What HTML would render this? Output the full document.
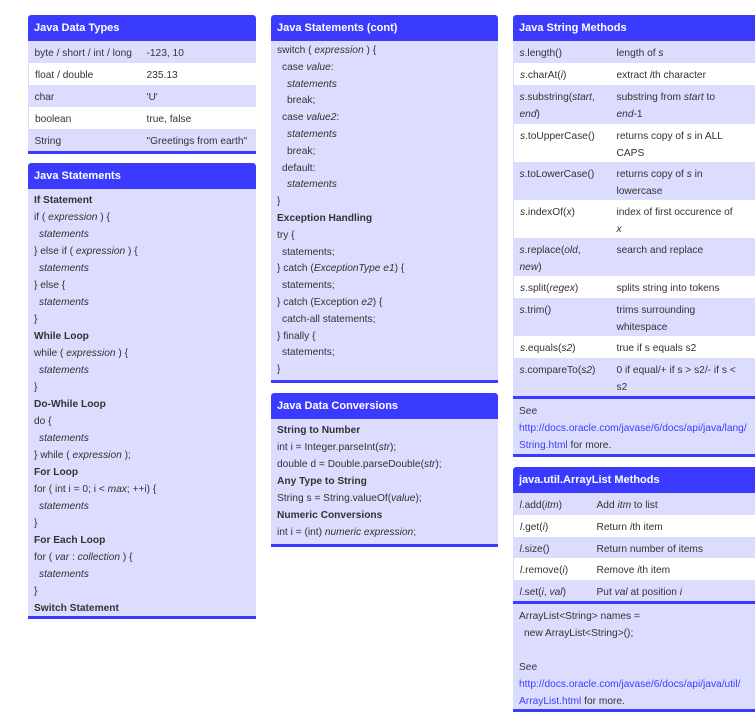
<!DOCTYPE html>
<html><head><meta charset="utf-8"><style>
*{margin:0;padding:0;box-sizing:border-box}
body{width:755px;height:715px;overflow:hidden;background:#fff;font-family:"Liberation Sans",Arial,sans-serif;font-size:10.2px;color:#333;position:relative}
.p{position:absolute;background:#dcdcff;border-bottom:3px solid #3b3bff;border-radius:3px 3px 0 0;overflow:hidden}
.h{background:#3b3bff;color:#fff;font-weight:bold;font-size:11px;height:26px;line-height:26px;padding-left:6px;border-radius:3px 3px 0 0}
table{border-collapse:collapse;width:100%;table-layout:fixed}
td{vertical-align:top;padding:4px 4px 0 6px;line-height:17px}
tr.w td{background:#fff}
tr.w td:first-child{border-left:1px solid #dcdcff}
.c{padding:4px 6px 4px 6px;line-height:17px}
.c div{white-space:nowrap}
b{color:#333}
.i1{padding-left:5px}.i2{padding-left:10px}
a{color:#3b3bff;text-decoration:none}
.sep{border-top:3px solid #3b3bff}
.nw{white-space:nowrap}
</style></head><body>

<div class="p" style="left:28px;top:15px;width:228px">
<div class="h">Java Data Types</div>
<table>
<col style="width:112px"><col>
<tr style="height:22px"><td class="nw">byte / short / int / long</td><td class="nw">-123, 10</td></tr>
<tr class="w" style="height:22px"><td>float / double</td><td>235.13</td></tr>
<tr style="height:22px"><td>char</td><td>'U'</td></tr>
<tr class="w" style="height:22px"><td>boolean</td><td>true, false</td></tr>
<tr style="height:22px"><td>String</td><td class="nw">"Greetings from earth"</td></tr>
</table></div>

<div class="p" style="left:28px;top:163px;width:228px;height:456px">
<div class="h">Java Statements</div>
<div class="c" style="padding-top:3px">
<div><b>If Statement</b></div>
<div>if ( <i>expression</i> ) {</div>
<div class="i1"><i>statements</i></div>
<div>} else if ( <i>expression</i> ) {</div>
<div class="i1"><i>statements</i></div>
<div>} else {</div>
<div class="i1"><i>statements</i></div>
<div>}</div>
<div><b>While Loop</b></div>
<div>while ( <i>expression</i> ) {</div>
<div class="i1"><i>statements</i></div>
<div>}</div>
<div><b>Do-While Loop</b></div>
<div>do {</div>
<div class="i1"><i>statements</i></div>
<div>} while ( <i>expression</i> );</div>
<div><b>For Loop</b></div>
<div>for ( int i = 0; i &lt; <i>max</i>; ++i) {</div>
<div class="i1"><i>statements</i></div>
<div>}</div>
<div><b>For Each Loop</b></div>
<div>for ( <i>var</i> : <i>collection</i> ) {</div>
<div class="i1"><i>statements</i></div>
<div>}</div>
<div><b>Switch Statement</b></div>
</div></div>

<div class="p" style="left:271px;top:15px;width:227px;height:368px">
<div class="h">Java Statements (cont)</div>
<div class="c" style="padding-top:2px;line-height:16.8px">
<div>switch ( <i>expression</i> ) {</div>
<div class="i1">case <i>value</i>:</div>
<div class="i2"><i>statements</i></div>
<div class="i2">break;</div>
<div class="i1">case <i>value2</i>:</div>
<div class="i2"><i>statements</i></div>
<div class="i2">break;</div>
<div class="i1">default:</div>
<div class="i2"><i>statements</i></div>
<div>}</div>
<div><b>Exception Handling</b></div>
<div>try {</div>
<div class="i1">statements;</div>
<div>} catch (<i>ExceptionType e1</i>) {</div>
<div class="i1">statements;</div>
<div>} catch (Exception <i>e2</i>) {</div>
<div class="i1">catch-all statements;</div>
<div>} finally {</div>
<div class="i1">statements;</div>
<div>}</div>
</div></div>

<div class="p" style="left:271px;top:393px;width:227px;height:154px">
<div class="h">Java Data Conversions</div>
<div class="c" style="padding-top:3px">
<div><b>String to Number</b></div>
<div>int i = Integer.parseInt(<i>str</i>);</div>
<div>double d = Double.parseDouble(<i>str</i>);</div>
<div><b>Any Type to String</b></div>
<div>String s = String.valueOf(<i>value</i>);</div>
<div><b>Numeric Conversions</b></div>
<div>int i = (int) <i>numeric expression</i>;</div>
</div></div>

<div class="p" style="left:513px;top:15px;width:250px;height:442px">
<div class="h">Java String Methods</div>
<table>
<col style="width:97px"><col>
<tr style="height:22px"><td><i>s</i>.length()</td><td>length of <i>s</i></td></tr>
<tr class="w" style="height:22px"><td><i>s</i>.charAt(<i>i</i>)</td><td>extract <i>i</i>th character</td></tr>
<tr style="height:39px"><td style="padding-right:10px"><i>s</i>.substring(<i>start</i>, <i>end</i>)</td><td style="padding-right:24px">substring from <i>start</i> to <i>end</i>-1</td></tr>
<tr class="w" style="height:38px"><td><i>s</i>.toUpperCase()</td><td style="padding-right:24px">returns copy of <i>s</i> in ALL CAPS</td></tr>
<tr style="height:38px"><td><i>s</i>.toLowerCase()</td><td style="padding-right:24px">returns copy of <i>s</i> in lowercase</td></tr>
<tr class="w" style="height:38px"><td><i>s</i>.indexOf(<i>x</i>)</td><td style="padding-right:24px">index of first occurence of <i>x</i></td></tr>
<tr style="height:38px"><td style="padding-right:18px"><i>s</i>.replace(<i>old</i>, <i>new</i>)</td><td>search and replace</td></tr>
<tr class="w" style="height:22px"><td><i>s</i>.split(<i>regex</i>)</td><td>splits string into tokens</td></tr>
<tr style="height:38px"><td><i>s</i>.trim()</td><td style="padding-right:30px">trims surrounding whitespace</td></tr>
<tr class="w" style="height:22px"><td><i>s</i>.equals(<i>s2</i>)</td><td>true if s equals s2</td></tr>
<tr style="height:38px"><td><i>s</i>.compareTo(<i>s2</i>)</td><td style="padding-right:20px">0 if equal/+ if s &gt; s2/- if s &lt; s2</td></tr>
</table>
<div class="sep c" style="padding-top:4px">
<div>See</div>
<div><a>http://docs.oracle.com/javase/6/docs/api/java/lang/</a></div>
<div><a>String.html</a> for more.</div>
</div></div>

<div class="p" style="left:513px;top:467px;width:250px;height:245px">
<div class="h">java.util.ArrayList Methods</div>
<table>
<col style="width:77px"><col>
<tr style="height:22px"><td><i>l</i>.add(<i>itm</i>)</td><td>Add <i>itm</i> to list</td></tr>
<tr class="w" style="height:22px"><td><i>l</i>.get(<i>i</i>)</td><td>Return <i>i</i>th item</td></tr>
<tr style="height:21px"><td><i>l</i>.size()</td><td>Return number of items</td></tr>
<tr class="w" style="height:22px"><td><i>l</i>.remove(<i>i</i>)</td><td>Remove <i>i</i>th item</td></tr>
<tr style="height:21px"><td><i>l</i>.set(<i>i</i>, <i>val</i>)</td><td>Put <i>val</i> at position <i>i</i></td></tr>
</table>
<div class="sep c" style="padding-top:4px">
<div>ArrayList&lt;String&gt; names =</div>
<div class="i1">new ArrayList&lt;String&gt;();</div>
<div>&nbsp;</div>
<div>See</div>
<div><a>http://docs.oracle.com/javase/6/docs/api/java/util/</a></div>
<div><a>ArrayList.html</a> for more.</div>
</div></div>

</body></html>
